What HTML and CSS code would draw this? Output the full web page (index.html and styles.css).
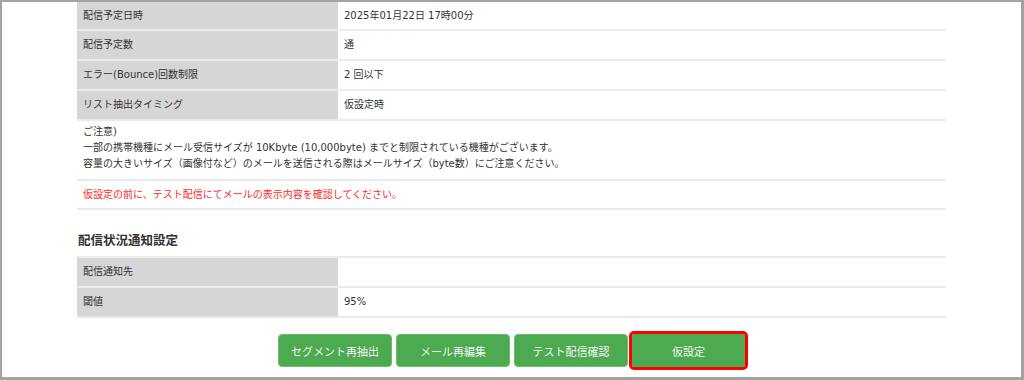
FILE: index.html
```html
<!DOCTYPE html>
<html lang="ja">
<head>
<meta charset="utf-8">
<link rel="stylesheet" href="styles.css">
</head>
<body>
<div class="frame">
  <table class="info first">
    <tr class="top"><th>配信予定日時</th><td>2025年01月22日 17時00分</td></tr>
    <tr><th>配信予定数</th><td>通</td></tr>
    <tr><th>エラー(Bounce)回数制限</th><td>2 回以下</td></tr>
    <tr><th>リスト抽出タイミング</th><td>仮設定時</td></tr>
    <tr><td colspan="2" class="note">ご注意)<br>一部の携帯機種にメール受信サイズが 10Kbyte (10,000byte) までと制限されている機種がございます。<br>容量の大きいサイズ（画像付など）のメールを送信される際はメールサイズ（byte数）にご注意ください。</td></tr>
    <tr><td colspan="2" class="warn">仮設定の前に、テスト配信にてメールの表示内容を確認してください。</td></tr>
  </table>
  <h2 class="section">配信状況通知設定</h2>
  <table class="info second">
    <tr><th>配信通知先</th><td></td></tr>
    <tr><th>閾値</th><td>95%</td></tr>
  </table>
  <div class="actions">
    <button class="btn">セグメント再抽出</button>
    <button class="btn">メール再編集</button>
    <button class="btn">テスト配信確認</button>
    <button class="btn selected">仮設定</button>
  </div>
</div>
</body>
</html>
```

FILE: styles.css
```css
html, body {
  margin: 0;
  padding: 0;
  background: #ffffff;
}
body {
  font-family: "DejaVu Sans", "Noto Sans CJK JP", sans-serif;
  font-size: 10px;
  color: #333333;
}
.frame {
  width: 1024px;
  height: 380px;
  box-sizing: border-box;
  border-top: 2px solid #a3a3a3;
  border-left: 2px solid #a3a3a3;
  border-right: 3px solid #a3a3a3;
  border-bottom: 3px solid #a3a3a3;
  padding-left: 75px;
  overflow: hidden;
  background: #fff;
}
.info {
  width: 869px;
  border-collapse: separate;
  border-spacing: 0;
  table-layout: fixed;
}
.info th, .info td {
  height: 30px;
  box-sizing: border-box;
  padding: 0 6px;
  border-bottom: 2px solid #ebebeb;
  text-align: left;
  font-weight: normal;
  line-height: 16px;
  vertical-align: middle;
}
.info th {
  width: 261px;
  background: #d6d6d6;
}
.info tr.top th, .info tr.top td {
  height: 29px;
}
.info td.note {
  height: 60px;
  padding-top: 3px;
  padding-bottom: 7px;
}
.info td.warn {
  height: 29px;
  color: #ff2a2a;
}
.second {
  border-top: 2px solid #ebebeb;
}
.section {
  margin: 0;
  padding: 22px 0 8px 1px;
  font-family: "Noto Sans CJK JP", sans-serif;
  font-size: 12.5px;
  line-height: 16px;
  font-weight: bold;
  color: #333;
}
.actions {
  width: 869px;
  display: flex;
  justify-content: center;
  gap: 4px;
  margin-top: 16px;
}
.btn {
  width: 114px;
  height: 33px;
  box-sizing: border-box;
  background: #4caa50;
  border: 1px solid #6cbc6c;
  border-radius: 4px;
  color: #f4f4f4;
  font-family: "Noto Sans CJK JP", sans-serif;
  font-size: 11px;
  padding: 0;
}
.btn.selected {
  width: 113px;
  border-color: #4caa50;
  outline: 3px solid #ff0000;
  border-radius: 2px;
}
```
